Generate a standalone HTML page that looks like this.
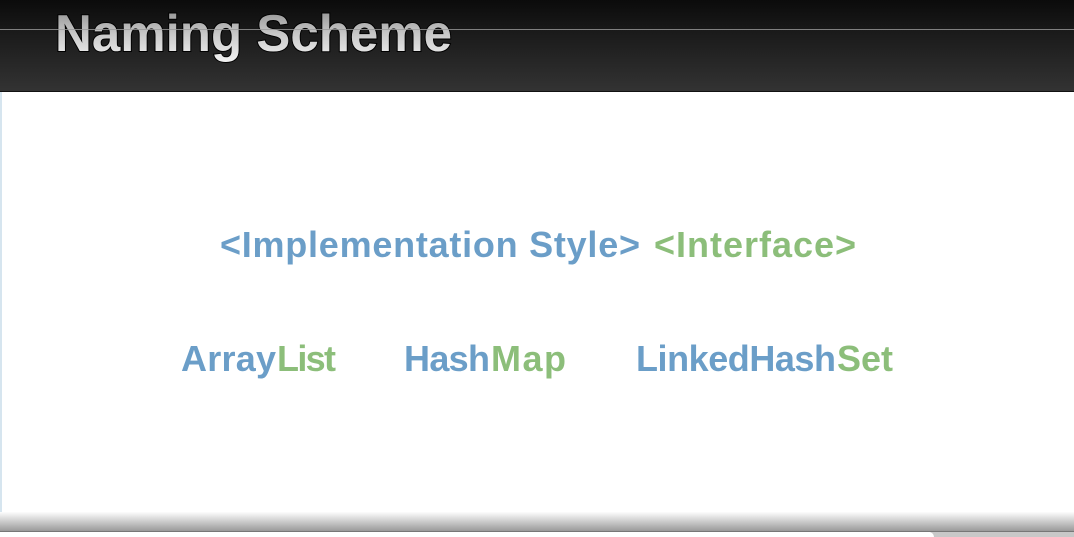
<!DOCTYPE html>
<html><head><style>
html,body{margin:0;padding:0;width:1074px;height:537px;overflow:hidden;background:#fff}
</style></head><body>
<svg width="1074" height="537" xmlns="http://www.w3.org/2000/svg" style="display:block">
<defs>
<linearGradient id="hdr" x1="0" y1="0" x2="0" y2="1">
<stop offset="0" stop-color="#0b0b0b"/><stop offset="0.35" stop-color="#1a1a1a"/><stop offset="1" stop-color="#333"/>
</linearGradient>
<linearGradient id="tt" x1="0" y1="0" x2="0" y2="1">
<stop offset="0" stop-color="#8a8a8a"/><stop offset="0.5" stop-color="#c8c8c8"/><stop offset="1" stop-color="#f4f4f4"/>
</linearGradient>
<linearGradient id="ft" x1="0" y1="0" x2="0" y2="1">
<stop offset="0" stop-color="#fdfdfd"/><stop offset="1" stop-color="#9a9a9a"/>
</linearGradient>
</defs>
<rect width="1074" height="92" fill="url(#hdr)"/>
<rect y="91" width="1074" height="1" fill="#111"/>
<rect x="0" y="92" width="2" height="420" fill="#d6e5ef"/>
<text x="55" y="51" font-family="Liberation Sans, sans-serif" font-weight="bold" font-size="52" textLength="397" lengthAdjust="spacingAndGlyphs" fill="url(#tt)" stroke="#000" stroke-width="2" paint-order="stroke">Naming Scheme</text>
<rect y="29" width="1074" height="1" fill="#9a9a9a" opacity="0.8"/>
<g font-family="Liberation Sans, sans-serif" font-size="36" font-weight="bold" lengthAdjust="spacingAndGlyphs">
<text x="220" y="257" fill="#6b9ec8" textLength="420">&lt;Implementation Style&gt;</text>
<text x="654" y="257" fill="#8cbe7a" textLength="202">&lt;Interface&gt;</text>
<text x="181" y="371" fill="#6b9ec8" textLength="95">Array</text>
<text x="277" y="371" fill="#8cbe7a" textLength="59">List</text>
<text x="404" y="371" fill="#6b9ec8" textLength="86">Hash</text>
<text x="491" y="371" fill="#8cbe7a" textLength="75">Map</text>
<text x="636" y="371" fill="#6b9ec8" textLength="200">LinkedHash</text>
<text x="837" y="371" fill="#8cbe7a" textLength="56">Set</text>
</g>
<rect y="512" width="1074" height="19" fill="url(#ft)"/>
<rect y="531" width="1074" height="1" fill="#777"/>
<rect y="532" width="1074" height="5" fill="#fff"/>
<rect x="930" y="532" width="144" height="5" fill="#c8c8c8"/>
<circle cx="929" cy="537" r="5" fill="#fff"/>
</svg>
</body></html>
